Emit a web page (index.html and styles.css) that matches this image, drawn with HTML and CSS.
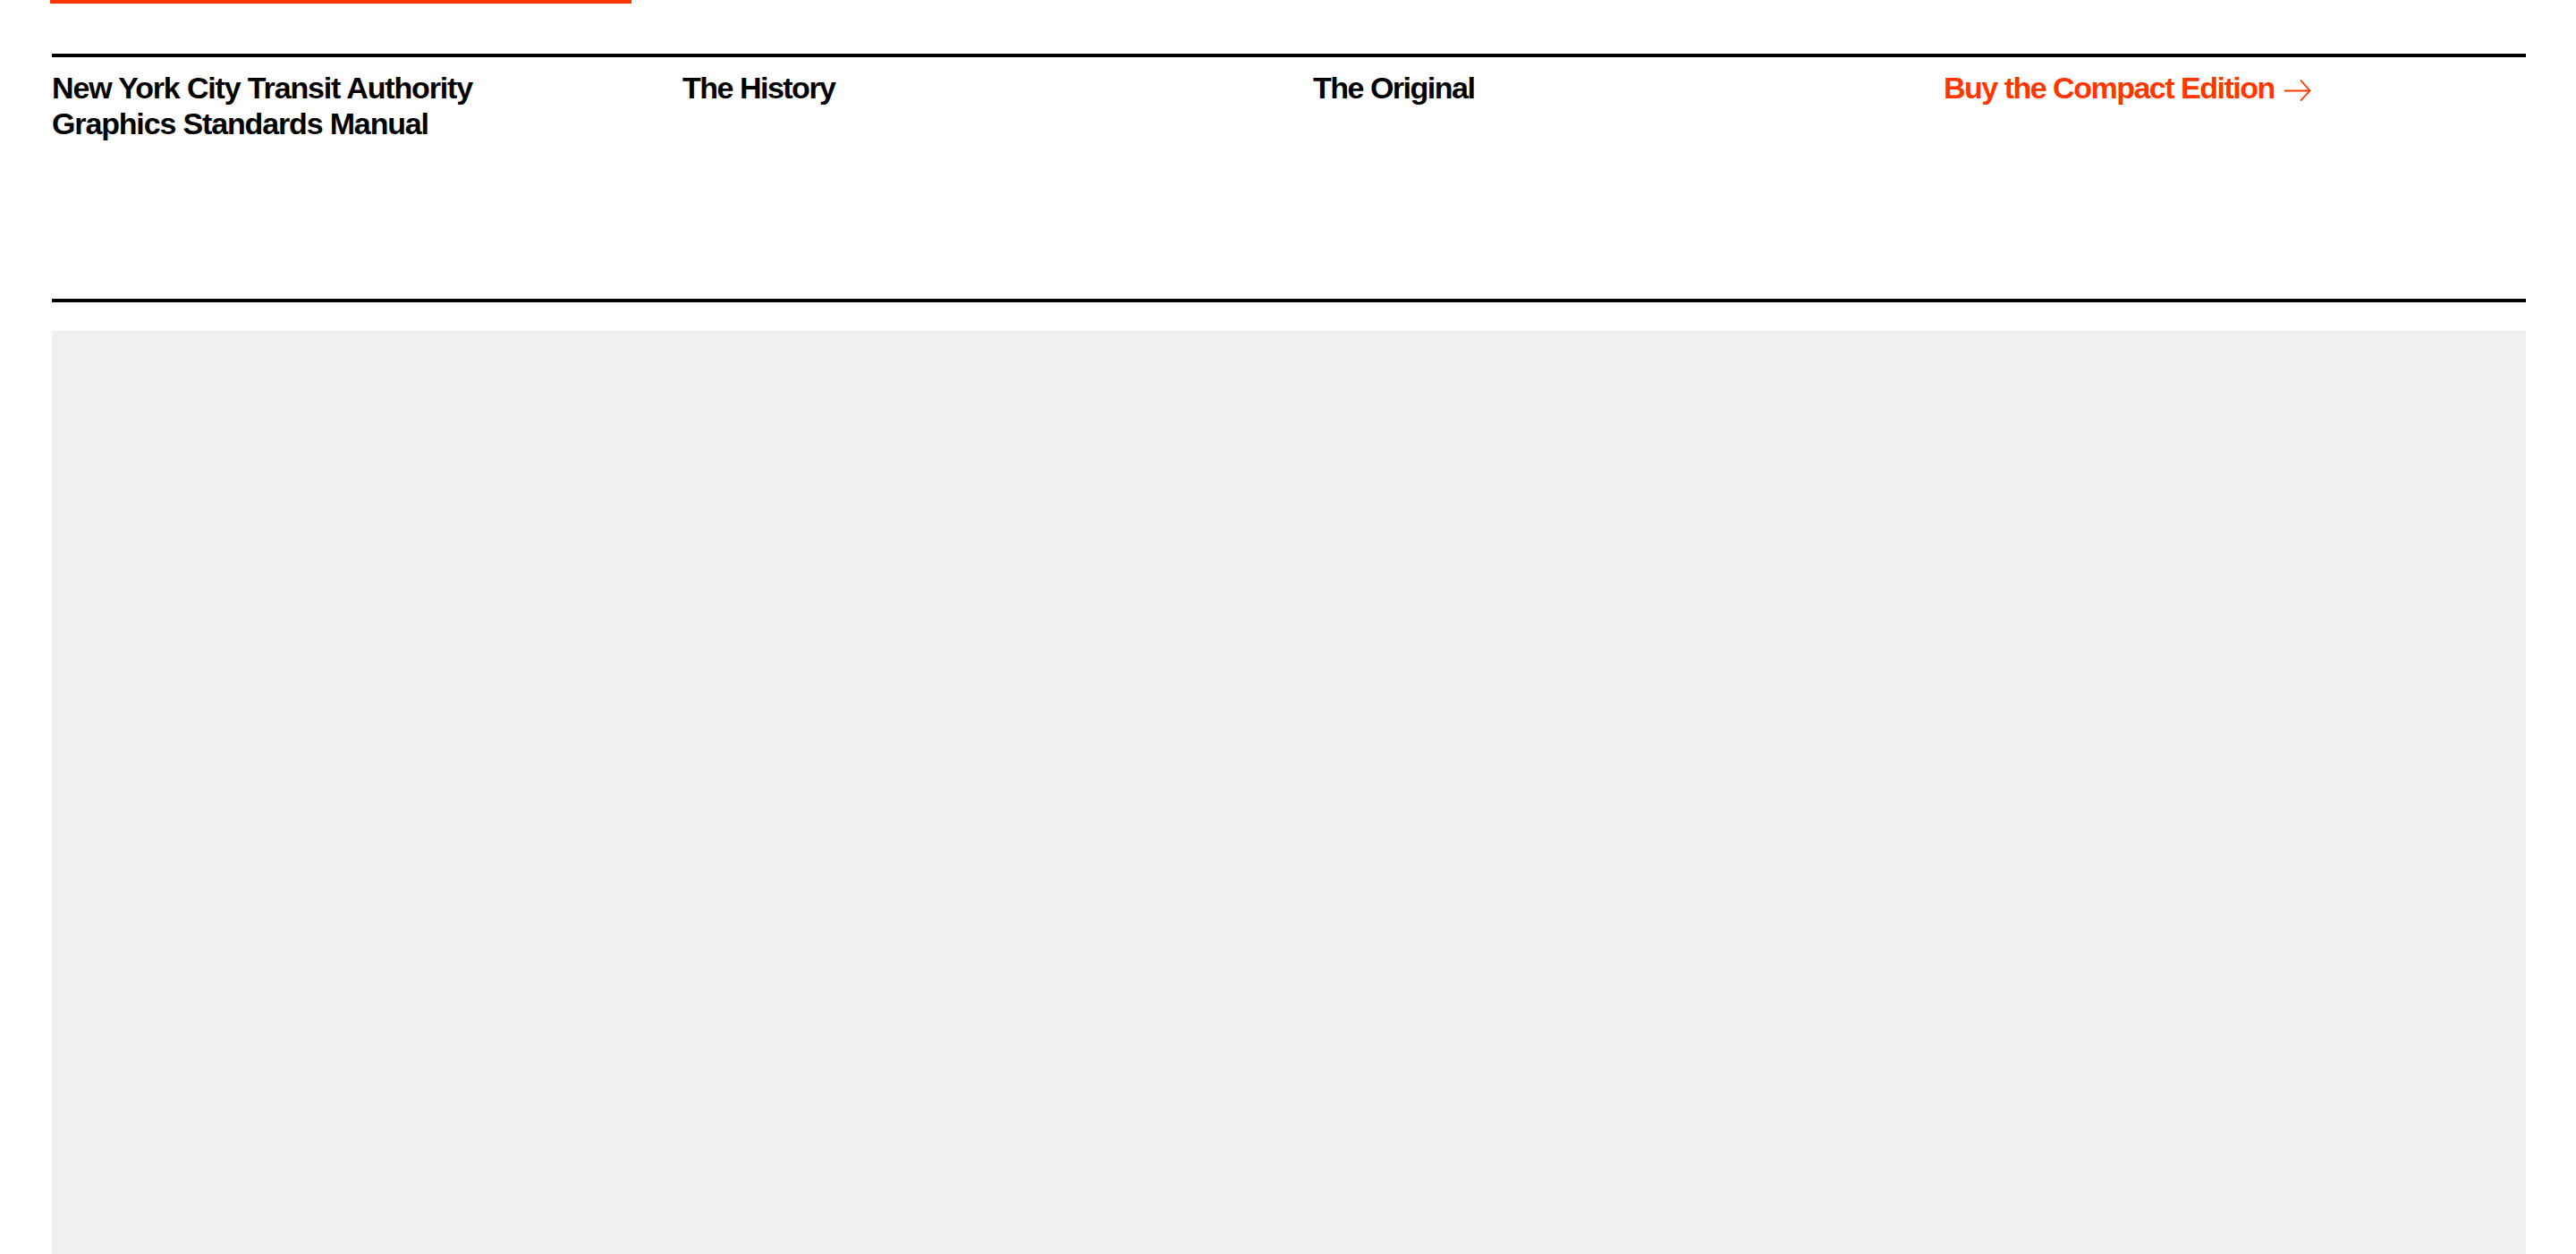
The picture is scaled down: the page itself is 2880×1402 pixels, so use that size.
FILE: index.html
```html
<!DOCTYPE html>
<html lang="en">
<head>
<meta charset="utf-8">
<title>New York City Transit Authority Graphics Standards Manual</title>
<link rel="stylesheet" href="styles.css">
</head>
<body>
<div class="page">
  <header class="site-header">
    <div class="progress">
      <span class="progress-bar"></span>
    </div>
    <nav class="nav">
      <a class="nav-item nav-title" href="#">New York City Transit Authority<br>Graphics Standards Manual</a>
      <a class="nav-item" href="#">The History</a>
      <a class="nav-item" href="#">The Original</a>
      <a class="nav-item nav-buy" href="#">Buy the Compact Edition<svg class="arrow" viewBox="0 0 30 24" width="30" height="24" aria-hidden="true"><path d="M0 12.5H28.5M18 0.5L28.5 12.5L18 23.5" fill="none" stroke="currentColor" stroke-width="1.8"/></svg></a>
    </nav>
  </header>
  <main class="main">
    <div class="hero"></div>
  </main>
</div>
</body>
</html>
```
FILE: styles.css
```css
html, body {
  margin: 0;
  padding: 0;
  background: #ffffff;
}

body {
  font-family: "Liberation Sans", Arial, sans-serif;
  color: #000000;
}

.page {
  padding: 0 56px 0 58px;
}

.progress {
  height: 60px;
}

.progress-bar {
  display: block;
  width: 650px;
  height: 4px;
  margin-left: -2px;
  background: #ff3600;
}

.nav {
  display: grid;
  grid-template-columns: repeat(4, 1fr);
  column-gap: 54px;
  height: 256px;
  padding-top: 14px;
  border-top: 4px solid #000000;
  border-bottom: 4px solid #000000;
}

.nav-item {
  font-size: 34px;
  line-height: 40px;
  font-weight: 700;
  letter-spacing: -1.5px;
  color: #000000;
  text-decoration: none;
  white-space: nowrap;
}

.nav-title {
  letter-spacing: -1.15px;
}

.nav-buy {
  color: #ff3600;
}

.arrow {
  display: inline-block;
  margin-left: 11px;
  vertical-align: -3px;
}

.main {
  padding-top: 32px;
}

.hero {
  height: 1100px;
  background: #eff0ef;
}
```
